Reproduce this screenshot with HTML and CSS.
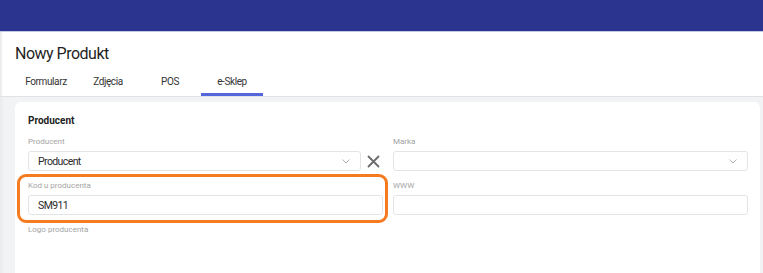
FILE: index.html
```html
<!DOCTYPE html>
<html lang="pl">
<head>
    <meta charset="UTF-8">
    <meta name="viewport" content="width=device-width, initial-scale=1.0">
    <title>Nowy Produkt</title>
    <link rel="stylesheet" href="styles.css">
</head>
<body>

    <!-- Pasek górny -->
    <div class="topbar"></div>

    <!-- Nagłówek z zakładkami -->
    <div class="page-head">
        <h1 class="page-title">Nowy Produkt</h1>
        <div class="tabs">
            <div class="tab">Formularz</div>
            <div class="tab">Zdjęcia</div>
            <div class="tab">POS</div>
            <div class="tab active">e-Sklep</div>
        </div>
    </div>

    <div class="content">
        <div class="card">
            <h2 class="section-title">Producent</h2>
            <div class="form-grid">
                <div class="field">
                    <label class="field-label">Producent</label>
                    <div class="select-row">
                        <div class="select">
                            <span class="select-value">Producent</span>
                            <svg class="chevron" width="8" height="5" viewBox="0 0 8 5"><polyline points="0.5,0.5 4,4 7.5,0.5" fill="none" stroke="#b0b0b0" stroke-width="1"/></svg>
                        </div>
                        <button class="clear-btn" type="button">
                            <svg width="13" height="13" viewBox="0 0 13 13"><path d="M1.5 1.5 L11.5 11.5 M11.5 1.5 L1.5 11.5" stroke="#6b6b6b" stroke-width="1.8" stroke-linecap="round"/></svg>
                        </button>
                    </div>
                </div>
                <div class="field">
                    <label class="field-label">Marka</label>
                    <div class="select">
                        <span class="select-value"></span>
                        <svg class="chevron" width="8" height="5" viewBox="0 0 8 5"><polyline points="0.5,0.5 4,4 7.5,0.5" fill="none" stroke="#b0b0b0" stroke-width="1"/></svg>
                    </div>
                </div>
                <div class="field highlighted">
                    <label class="field-label">Kod u producenta</label>
                    <div class="input">SM911</div>
                </div>
                <div class="field">
                    <label class="field-label">WWW</label>
                    <div class="input"></div>
                </div>
                <div class="field">
                    <label class="field-label">Logo producenta</label>
                </div>
            </div>
        </div>
    </div>

</body>
</html>
```

FILE: styles.css
```css
body {
    margin: 0;
    font-family: Roboto, "Liberation Sans", sans-serif;
    background-color: #f2f3f5;
    color: #222;
    min-height: 273px;
}
.topbar {
    height: 31px;
    background-color: #2b3590; /* granat */
    border-bottom: 1px solid #c3c7e6;
}
.page-head {
    background: linear-gradient(to right, #e6e6e6, #fff 3px);
    border-bottom: 1px solid #e1e2e5;
}
.page-title {
    margin: 0;
    padding: 12px 0 0 15px;
    font-size: 16px;
    line-height: 20px;
    font-weight: 400;
    letter-spacing: -0.5px;
    color: #1f1f1f;
}
.tabs {
    display: flex;
    margin-top: 6px;
    padding-left: 15px;
}
.tab {
    width: 62px;
    text-align: center;
    font-size: 10px;
    line-height: 12px;
    letter-spacing: -0.4px;
    color: #333;
    padding: 6px 0 5px;
    border-bottom: 3px solid transparent;
}
.tab.active {
    border-bottom-color: #5566dd;
}
.content {
    padding: 5px 3px 0 15px;
    background: linear-gradient(to right, #ebebed, #f2f3f5 4px);
}
.card {
    background-color: #fff;
    border-radius: 6px 6px 0 0;
    padding: 13px 12px 0 13px;
    min-height: 160px;
}
.section-title {
    margin: 0 0 10px;
    font-size: 10px;
    line-height: 12px;
    font-weight: 700;
    color: #222;
}
.form-grid {
    display: grid;
    grid-template-columns: 1fr 1fr;
    column-gap: 10px;
    row-gap: 10px;
}
.field {
    position: relative;
}
.field-label {
    display: block;
    font-size: 8px;
    line-height: 9px;
    color: #a3a3a3;
    margin-bottom: 5px;
}
.select-row {
    display: flex;
}
.select,
.input {
    box-sizing: border-box;
    height: 20px;
    border: 1px solid #e3e4e6;
    border-radius: 3px;
    background-color: #fff;
    display: flex;
    align-items: center;
    padding: 0 10px 0 9px;
    font-size: 10.5px;
    letter-spacing: -0.6px;
    color: #2a2a2a;
}
.select {
    flex: 1;
}
.select-value {
    flex: 1;
}
.chevron {
    display: block;
}
.clear-btn {
    width: 22px;
    padding: 0 0 0 6px;
    border: none;
    background: none;
    display: flex;
    align-items: center;
    cursor: pointer;
}
/* ramka wyróżnienia (adnotacja) */
.highlighted::after {
    content: "";
    position: absolute;
    top: -7px;
    bottom: -8px;
    left: -11px;
    right: -5px;
    border: 3px solid #f47b20;
    border-radius: 9px;
}
```
